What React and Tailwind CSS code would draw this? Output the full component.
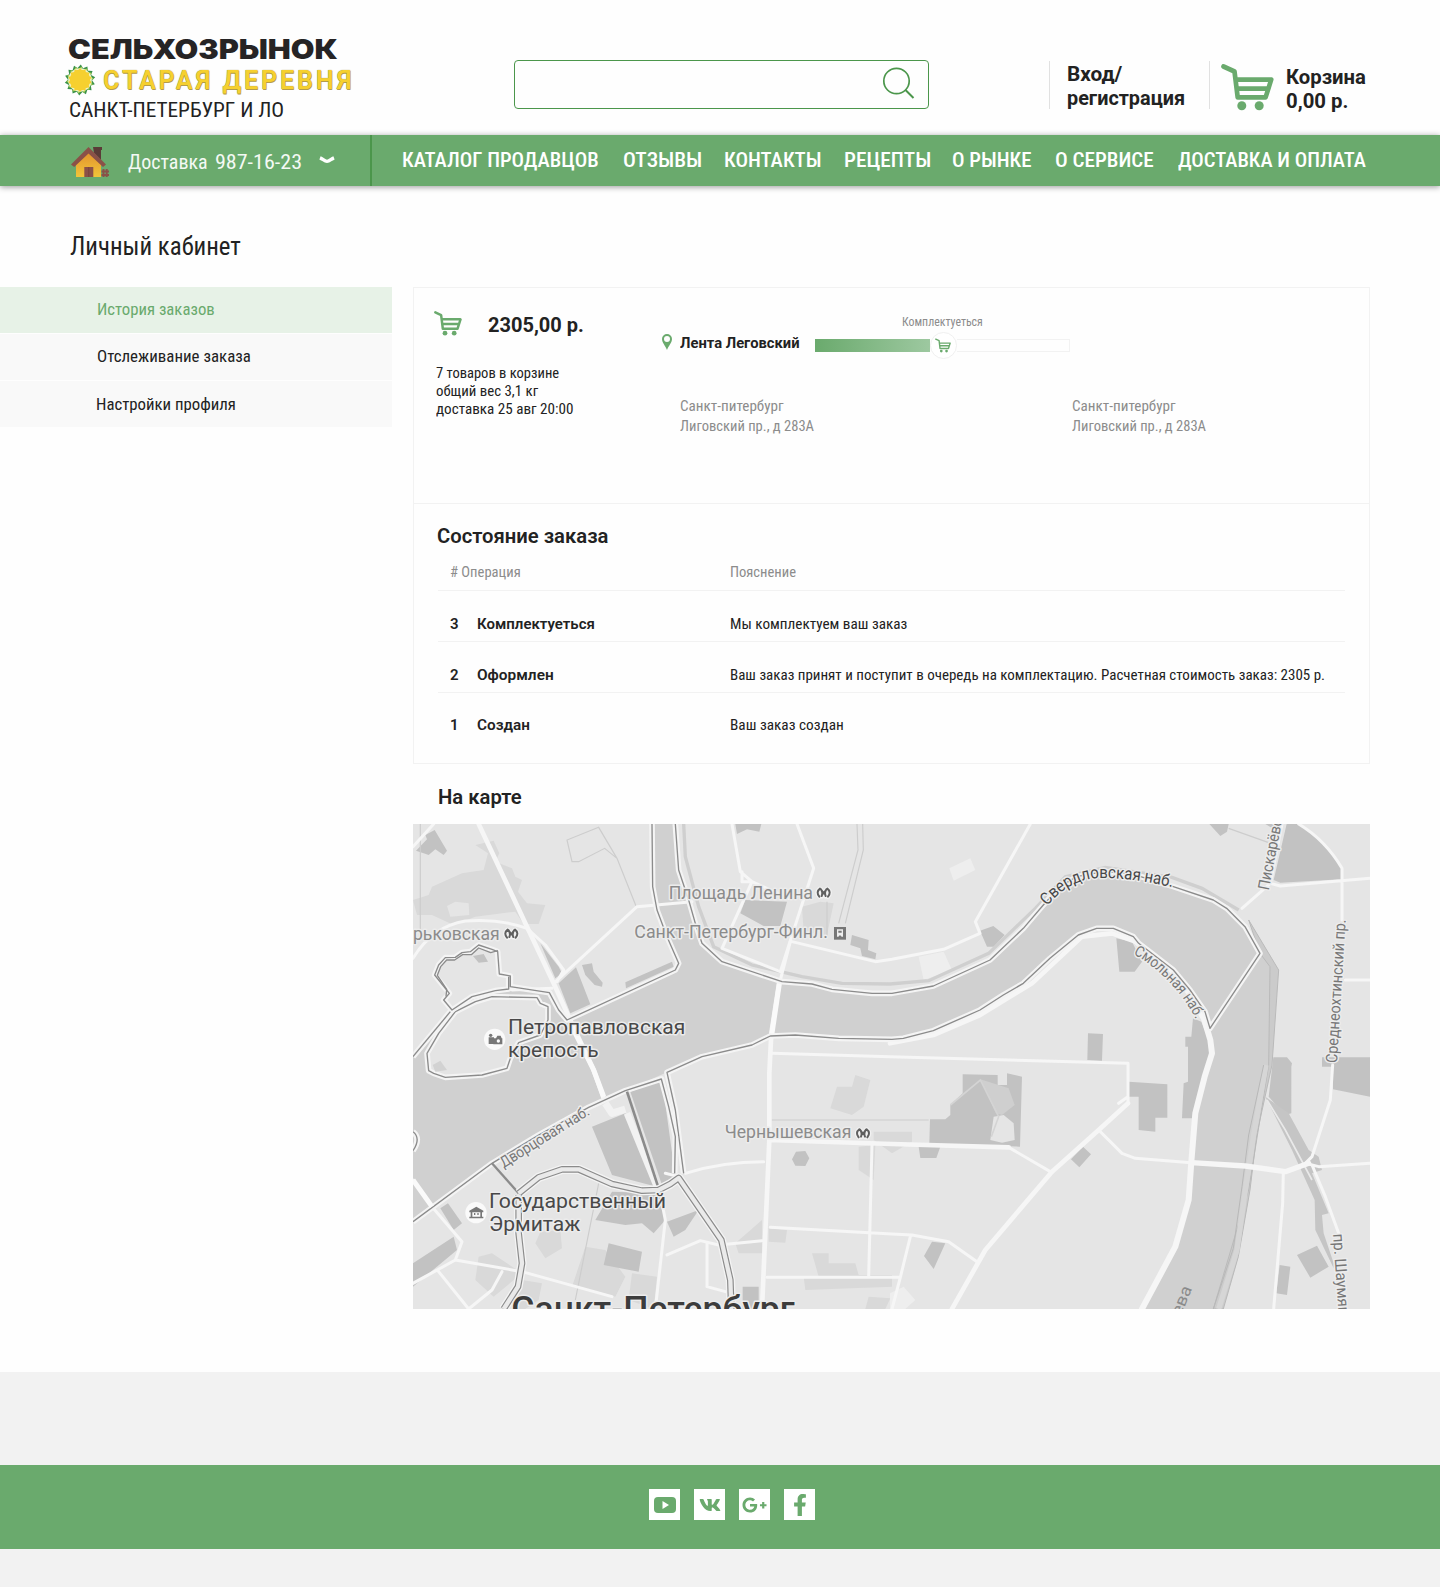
import React, { useLayoutEffect, useRef, useState } from "react";
import { FaVk, FaGooglePlusG, FaFacebookF } from "react-icons/fa";

/* One line of text, condensed or widened horizontally to the given width. */
function Fit({ w, className = "", children }) {
  const ref = useRef(null);
  const [k, setK] = useState(1);
  useLayoutEffect(() => {
    setK(w / ref.current.offsetWidth);
  }, [w, children]);
  return (
    <span className={"block shrink-0 whitespace-nowrap " + className} style={{ width: w }}>
      <span ref={ref} className="inline-block origin-left" style={{ transform: `scaleX(${k})` }}>
        {children}
      </span>
    </span>
  );
}

function Cart({ className }) {
  return (
    <svg viewBox="0 0 53 47" className={className} fill="none" stroke="#6aaa6d" strokeWidth="4.700" strokeLinecap="round" strokeLinejoin="round">
      <path d="M2.500 2.500 13.500 7.500 16.700 33.400H44.600L50.200 15.600H15M16 24.600H46" />
      <circle cx="20.800" cy="41.800" r="4.500" fill="#6aaa6d" stroke="none" />
      <circle cx="38.200" cy="41.800" r="4.500" fill="#6aaa6d" stroke="none" />
    </svg>
  );
}

const petals = Array.from({ length: 14 }, (_, i) => (i * 360) / 14);

function Sunflower() {
  return (
    <svg viewBox="-16 -16 32 32" className="h-8 w-8 shrink-0">
      {petals.map((a) => (
        <g key={a} transform={`rotate(${a})`}>
          <path d="M-4.200-10 0.800-15.400 4.200-10Z" fill="#3a9149" />
          <path d="M-1.500-11 1.800-13.500 3.400-10Z" fill="#a9cf58" />
        </g>
      ))}
      <circle r="11.800" fill="#eef3cf" />
      <circle r="10.400" fill="#f6d02f" />
      {petals.map((a) => (
        <circle key={a} r="1.300" cy="-10.200" fill="#f6d02f" transform={`rotate(${a})`} />
      ))}
    </svg>
  );
}

function House() {
  return (
    <svg viewBox="0 0 38 31" className="h-[31px] w-[38px] shrink-0">
      <defs>
        <linearGradient id="wall" x2="0" y2="1">
          <stop offset="0" stopColor="#e0902c" />
          <stop offset="1" stopColor="#f2c53a" />
        </linearGradient>
      </defs>
      <path d="M22 1h9v3h-1v10l-7-7Z" fill="#5a3b37" />
      <path d="M5 17 17.500 5 30 17V31H5Z" fill="url(#wall)" />
      <path d="M0 18.500 17.500 1 35 18.500 32 21 17.500 7.500 3.200 21Z" fill="#8a5148" />
      <rect x="13.300" y="21" width="9" height="10" fill="#8a5148" />
      <path d="M17.800 21v10" stroke="#75433c" />
      <path d="M32.500 23v8M35.700 23v8M30.500 25.500h7.500M30.500 29h7.500" stroke="#8a5148" strokeWidth="2" />
    </svg>
  );
}

const nav = [
  ["КАТАЛОГ ПРОДАВЦОВ", 197, "ml-[30px]"],
  ["ОТЗЫВЫ", 79, "ml-[24px]"],
  ["КОНТАКТЫ", 98, "ml-[22px]"],
  ["РЕЦЕПТЫ", 87, "ml-[22px]"],
  ["О РЫНКЕ", 80, "ml-[21px]"],
  ["О СЕРВИСЕ", 99, "ml-[23px]"],
  ["ДОСТАВКА И ОПЛАТА", 188, "ml-[24px]"],
];

const ops = [
  ["3", "Комплектуеться", 118, "Мы комплектуем ваш заказ", 177, "h-[51px] pt-[23px] border-b"],
  ["2", "Оформлен", 77, "Ваш заказ принят и поступит в очередь на комплектацию. Расчетная стоимость заказ: 2305 р.", 595, "h-[51px] pt-[23px] border-b"],
  ["1", "Создан", 53, "Ваш заказ создан", 114, "h-[70px] pt-[22px]"],
];

/* River bank: a dark line on a light casing. */
function Shore({ d, fill = "none" }) {
  return (
    <>
      <path d={d} fill={fill} stroke="#f4f4f4" strokeWidth="17" strokeLinejoin="round" />
      <path d={d} fill="none" stroke="#8b8b8b" strokeWidth="4" strokeLinejoin="round" />
    </>
  );
}

/* Narrow canal: two parallel dark lines with a light core. */
function Canal({ d }) {
  return (
    <g fill="none" strokeLinejoin="round">
      <path d={d} stroke="#f4f4f4" strokeWidth="28" />
      <path d={d} stroke="#8b8b8b" strokeWidth="20" />
      <path d={d} stroke="#eaeaea" strokeWidth="13" />
    </g>
  );
}

function Label({ x, y, len, size = 53, fill = "#8b8b8b", rot = 0, halo = "#ececec", weight = 400, children }) {
  return (
    <text
      transform={`translate(${x} ${y}) rotate(${rot})`}
      textLength={len}
      lengthAdjust="spacingAndGlyphs"
      fontSize={size}
      fontWeight={weight}
      fill={fill}
      stroke={halo}
      strokeWidth="9"
      strokeLinejoin="round"
      paintOrder="stroke"
    >
      {children}
    </text>
  );
}

function Metro({ x, y }) {
  return (
    <g transform={`translate(${x} ${y})`} fill="none" strokeLinecap="round" strokeLinejoin="round">
      <path d="M-12-11Q-24 0-12 12M12-11Q24 0 12 12M-5 11-9-10 0 4 9-10 5 11" stroke="#f2f2f2" strokeWidth="14" />
      <path d="M-11-12Q-24-2-13 12M11-12Q24-2 13 12M-6 10Q-1 0-9-11L0 2 9-11Q1 0 6 10" stroke="#606060" strokeWidth="6" />
    </g>
  );
}

function CityMap() {
  return (
    <svg viewBox="0 0 957 485" className="block h-[485px] w-[957px]" fontFamily="Roboto, sans-serif">
      <rect width="957" height="485" fill="#e5e5e5" />
      <g transform="translate(-1 -4) scale(.33333)">
        {/* parks and quarters */}
        <g fill="#d9d9d9">
          <path d="M190 75 245 62 262 100 250 125 300 145 310 170 330 180 318 215 345 250 400 255 380 312 335 312 310 275 190 290 125 315 60 285 15 285 3 240 50 225 60 200 150 160 215 150 228 100Z" />
          <path d="M1170 260 1225 245 1265 250 1245 345 1175 335ZM1275 800 1320 800 1330 765 1375 780 1355 860 1320 885 1255 865Z" />
          <path d="M385 1235 445 1230 450 1285 400 1315 370 1270ZM200 1310 240 1300 330 1360 245 1430 190 1380ZM520 1280 580 1290 640 1370 610 1430 480 1400ZM660 1360 735 1370 725 1467 650 1440ZM970 1270 1050 1200 1050 1300 980 1300ZM1070 1225 1125 1230 1120 1268 1070 1265ZM1200 1300 1250 1300 1250 1330 1330 1330 1340 1365 1440 1365 1440 1400 1180 1410 1175 1370 1220 1370ZM1340 980 1390 975 1385 1080 1340 1050Z" />
          <path d="M1385 935H1500V965L1440 1000 1385 960ZM330 1380 390 1390 380 1440 340 1467H310ZM1370 1430 1435 1435 1420 1467H1360Z" />
        </g>
        <path d="M105 258 130 245 170 250 172 285 115 290Z" fill="#e5e5e5" />
        <g fill="#c2c2c2">
          <path d="M12 92 45 58 40 45 68 30 105 92 95 105 70 88 50 105 35 100ZM970 12H1048L1042 35 1005 28 975 42ZM1000 240 1125 245 1105 318 1055 318 985 280ZM1320 345 1370 360 1368 390 1393 400 1390 418 1350 408 1345 385 1315 375ZM510 435 540 430 545 455 572 488 570 500 548 495 520 465ZM440 490 492 442 535 553 475 580ZM640 487 780 425 785 440 642 505ZM385 370 440 440 450 460 430 475ZM183 408 215 402 228 425 200 428Z" />
          <path d="M2560 12H2600L2590 30ZM2624 12H2664Q2730 60 2788 140V178L2605 188 2585 180ZM1704 332 1744 318 1778 345 1745 380H1725ZM2113 355 2160 365 2190 425 2168 455H2122ZM2028 640 2073 642 2070 722 2026 720ZM2392 12H2450L2445 35 2425 48Z" />
          <path d="M2343 595 2368 605 2390 660 2395 735 2365 870 2350 895 2310 895 2315 790 2328 785V680H2320V650H2338ZM2584 712H2625L2640 730 2638 740V880L2620 885 2570 830ZM2780 712H2874V830L2763 808V740H2730V712Z" />
          <path d="M1652 763 1757 765V795H1785V760L1830 770 1824 980 1552 972 1554 898H1600L1615 885V855L1652 820ZM2150 785 2266 793V893H2230V935L2180 930V830H2150ZM2013 980 2037 1003 2002 1042 1977 1018ZM1520 980H1585L1573 1014H1525ZM1560 1265 1600 1270 1565 1347 1536 1308ZM2603 1335 2635 1340 2625 1425 2593 1420ZM2655 1305 2715 1277 2750 1340 2695 1373ZM1140 1018 1152 995 1180 993 1192 1015 1180 1038 1150 1037Z" />
          <path d="M540 920 640 880 725 1098 600 1065ZM655 815 750 780 790 1070 750 1095ZM590 1270 690 1295 680 1355 575 1335ZM600 1115 740 1120 755 1165 760 1200 725 1240 690 1210 640 1215 550 1200ZM765 1205 860 1170 820 1230 785 1250ZM85 1165 108 1150 150 1210 125 1230ZM3 1330 125 1250 135 1290 3 1400ZM992 1400 1040 1400V1467H992Z" />
        </g>
        <path d="M1612 145 1675 115 1690 150 1625 182ZM1520 410 1595 395 1620 450 1535 480ZM1434 1420 1475 1400 1510 1440 1480 1467H1434Z" fill="#eeeeee" />
        <path d="M1705 778 1790 805 1808 855 1770 885 1752 880Z" fill="#cfcfcf" />
        <path d="M1735 960 1745 890 1775 885 1805 910 1808 960 1770 968Z" fill="#e5e5e5" />
        <path d="M1615 855 1705 780 1760 890 1738 950" fill="none" stroke="#d4d4d4" strokeWidth="5" />

        {/* thin district lines */}
        <g fill="none" stroke="#cdcdcd" strokeWidth="3.500">
          <path d="M25 12V330M672 258 615 115 560 22 465 60 480 125 500 125 578 85 615 115M1335 12 1338 90 1280 310M1352 12 1354 90 1300 310M1245 245V350M1078 900H1550M560 1090 490 1440M2450 25 2570 68" />
        </g>

        {/* water */}
        <path
          fill="#d0d0d0"
          d="M720 12 722 200 735 270 765 350 800 430 790 450 465 600 440 570 412 518 300 500 250 512 180 530 120 570 3 710V1205L240 1030 380 945 530 862 640 812 765 757 870 710 1020 675 1075 648 1150 645 1280 655 1440 658 1474 655 1564 632 1704 570 1774 525 1834 490 1914 415 1999 345 2054 325 2104 325 2164 350 2284 450 2334 510 2379 575 2394 625 2405 700 2389 735 2359 870 2339 1020 2329 1150 2284 1300 2194 1467H2434L2479 1310 2514 1110 2534 945 2578 735 2584 450 2544 400 2499 320 2444 265 2404 240 2284 200 2154 160 2074 155 1994 170 1944 200 1894 255 1834 325 1734 420 1564 498 1440 520 1380 520 1260 508 1200 492 1110 485 930 425 870 370 850 310 830 240 800 150 790 12Z"
        />
        {/* eastern embankment */}
        <path d="M2544 400 2574 440 2570 735 2510 1110 2404 1467H2434L2479 1310 2514 1110 2534 945 2580 735 2600 450 2510 300Z" fill="#cbcbcb" stroke="#bababa" strokeWidth="3" />
        <path d="M2562 735 2525 945 2500 1110 2475 1290 2420 1467" fill="none" stroke="#d6d6d6" strokeWidth="16" />
        <path d="M2555 735 2510 945 2490 1100 2464 1285 2404 1467" fill="none" stroke="#b8b8b8" strokeWidth="3" />
        <path d="M815 12 820 110 860 260 905 380 1020 435 1170 470 1290 490 1434 492 1550 482 1730 400 1870 265 1960 170 2080 142 2280 172 2370 205 2480 270" fill="none" stroke="#cfcfcf" strokeWidth="10" />
        <path d="M2560 830 2630 880 2690 990 2720 1010 2730 1050 2700 1060 2750 1180 2730 1185 2735 1240 2765 1330 2765 1345 2710 1230 2708 1140 2640 990Z" fill="#c5c5c5" />
        <path d="M2565 840 2620 930 2700 1080" fill="none" stroke="#e9e9e9" strokeWidth="5" />

        {/* roads */}
        <g fill="none" stroke="#f6f6f6" strokeLinejoin="round" strokeLinecap="round">
          <g strokeWidth="14">
            <path d="M200 12 345 320 425 490 470 590 545 750 575 835" />
            <path d="M1102 485 1078 640 1072 760V960L1050 1467M1072 960 1440 972 1790 982" />
            <path d="M2374 590 2395 660 2400 700 2378 770 2350 880 2338 1025 2330 1140 2290 1280 2190 1467" strokeWidth="18" />
            <path d="M1434 670 1564 645 1704 585 1860 490 2010 350 2100 340 2170 365 2300 470 2370 590" />
            <path d="M2338 1028 2500 1038 2620 1055 2690 1030" strokeWidth="16" />
            <path d="M2148 850 2060 930 1920 1055 1720 1290 1620 1467" />
          </g>
          <g strokeWidth="9">
            <path d="M3 80 65 12M3 415Q60 320 160 303 260 295 345 325L400 375 455 450M425 490 675 260 840 245M435 485 455 450M960 12 985 155 1020 185 930 385 1105 455 1205 145 1155 12M990 155V185H1020L1130 235M1140 365 1390 425 1440 418 1595 388 1704 340 1690 305 1855 12" />
            <path d="M1105 480 1135 365M300 510 420 505M1080 700 1434 710 2148 730V850M1075 1222 1440 1242 1500 1245 1610 1265 1695 1325M1065 1372H1465L1440 1467M1465 1372 1495 1250M1380 975 1370 1370M1790 982 1920 1058M2060 930 2130 1000 2170 1015 2338 1028M2120 850 2148 830" />
            <path d="M820 1060Q930 1025 1055 1025M750 1150 760 1200 730 1467M765 1305 865 1262 920 1275 1050 1262M885 1270V1400L940 1415M130 1320 330 1355 600 1430M3 1390 130 1320 150 1265 60 1160 3 1080M80 1355 170 1467M170 1467 240 1410 270 1355M760 1060 800 1070" />
            <path d="M2490 265 2575 190 2605 198 2874 175M2575 190 2610 12M2660 12Q2740 60 2790 145V300M2800 480H2874M2762 735 2755 840 2700 1010 2680 1030 2720 1040 2874 1030M2700 1035 2740 1130 2780 1240M2614 1055 2612 1150 2585 1467" />
          </g>
        </g>

        {/* shorelines */}
        <Shore d="M50 752 45 700 80 640 130 575 190 545 240 530 375 533 385 550 408 560V600L385 645 320 668 295 715 285 745 210 765 100 772 65 760Z" fill="#e4e4e4" />
        <path d="M62 735 85 722 105 750 70 755Z" fill="#d2d2d2" />
        <Shore d="M720 12 722 200 735 270 765 350 800 430 790 450 465 600 440 570 412 518 295 500 295 468 262 462 257 395 240 388 200 375 175 395 150 398 130 412 100 413 80 435 68 465 112 520 95 540 120 570 180 530 250 512 290 507V470" />
        <Shore d="M3 710 115 575" />
        <Shore d="M790 12 800 150 830 240 850 310 870 370 930 425 1110 485 1200 492 1260 508 1380 520 1440 520 1564 498 1734 420 1834 325 1894 255 1944 200 1994 170 2074 155 2154 160 2284 200 2404 240 2444 265 2499 320 2544 400 2394 625 2379 575 2334 510 2284 450 2180 370 2164 350 2104 325H2054L1999 345 1914 415 1834 490 1774 525 1704 570 1564 632 1474 655 1440 658 1280 655 1150 645 1075 648 1020 675 870 710 765 757 790 870 815 1060" />
        <path d="M645 880 735 1100" fill="none" stroke="#f2f2f2" strokeWidth="20" />
        <path d="M580 850 600 880 640 868" fill="none" stroke="#f2f2f2" strokeWidth="22" strokeLinejoin="round" />
        <Shore d="M3 1205 240 1030 380 945 530 862 640 812 748 777 770 860 790 950 788 1060" />
        <path d="M645 815 740 1105" fill="none" stroke="#8b8b8b" strokeWidth="8" />
        <path d="M240 1030 320 1120" fill="none" stroke="#8b8b8b" strokeWidth="7" />
        <Canal d="M320 1120 380 1072 450 1048 500 1048 600 1092 690 1112 740 1110 775 1092 800 1074 928 1260 955 1380 958 1467" />
        <Canal d="M320 1125V1240L330 1330 318 1400 275 1467" />
        <Shore d="M3 935Q28 955 3 992" />
        <path d="M258 392 236 398 200 384 178 404 152 404 128 420 104 420 86 440 76 466 104 508 102 530" fill="none" stroke="#8b8b8b" strokeWidth="4" strokeLinejoin="round" />
        <path d="M480 620 545 750 575 830M1102 492 1080 640M3 1080 60 1160" fill="none" stroke="#fafafa" strokeWidth="15" />

        {/* place markers */}
        <g>
          <circle cx="248" cy="658" r="32" fill="#fafafa" />
          <path d="M230 652h16v20h-16ZM244 655h8l4-8h10l3 8h2v18h-27Z" fill="#777" />
          <circle cx="236" cy="646" r="5" fill="#777" />
          <circle cx="259" cy="663" r="5" fill="#fafafa" />
          <circle cx="192" cy="1178" r="32" fill="#fafafa" />
          <path d="M172 1172 193 1160 214 1172V1177H172ZM176 1177h5v14h-5ZM205 1177h5v14h-5ZM172 1190h42v5H172ZM186 1179h4v6h-4ZM196 1179h4v6h-4Z" fill="#777" />
          <rect x="1266" y="321" width="36" height="38" fill="#777" />
          <path d="M1275 328h18v22h-4l-5-5-5 5h-4ZM1279 332h10v6h-10Z" fill="#eee" fillRule="evenodd" />
        </g>
        <Metro x={1235} y={218} />
        <Metro x={298} y={341} />
        <Metro x={1353} y={940} />

        {/* labels */}
        <Label x={770} y={237} len={433}>Площадь Ленина</Label>
        <Label x={3} y={360} len={260}>рьковская</Label>
        <Label x={667} y={355} len={581}>Санкт-Петербург-Финл.</Label>
        <Label x={938} y={955} len={380}>Чернышевская</Label>
        <Label x={288} y={643} len={532} size={63} fill="#484848">Петропавловская</Label>
        <Label x={288} y={712} len={272} size={63} fill="#484848">крепость</Label>
        <Label x={231} y={1164} len={531} size={63} fill="#484848">Государственный</Label>
        <Label x={231} y={1234} len={274} size={63} fill="#484848">Эрмитаж</Label>
        <Label x={298} y={1503} len={850} size={105} fill="#3c3c3c" weight={500}>Санкт-Петербург</Label>
        <Label x={275} y={1045} len={307} size={46} fill="#777" rot={-32}>Дворцовая наб.</Label>
        <Label x={2570} y={212} len={240} size={48} fill="#777" rot={-79}>Пискарёвск</Label>
        <Label x={2775} y={730} len={432} size={48} fill="#777" rot={-86.5}>Среднеохтинский пр.</Label>
        <Label x={2763} y={1242} len={270} size={48} fill="#777" rot={86}>пр. Шаумяна</Label>
        <Label x={2292} y={1526} len={130} size={50} fill="#8b8b8b" halo="#d0d0d0" rot={-68}>Нева</Label>
        <path id="north" d="M1905 258C1960 195 2010 175 2070 174 2140 174 2210 185 2300 206" fill="none" />
        <path id="east" d="M2164 402C2235 440 2315 520 2352 600" fill="none" />
        <g stroke="#ececec" strokeWidth="9" paintOrder="stroke" strokeLinejoin="round">
          <text fontSize="51" fill="#484848">
            <textPath href="#north" textLength="405" lengthAdjust="spacingAndGlyphs">Свердловская наб.</textPath>
          </text>
          <text fontSize="46" fill="#777">
            <textPath href="#east" textLength="275" lengthAdjust="spacingAndGlyphs">Смольная наб.</textPath>
          </text>
        </g>
      </g>
    </svg>
  );
}

function Address() {
  return (
    <div className="text-[15px] leading-5 text-[#8c8c8c] [font-stretch:75%]">
      <Fit w={104}>Санкт-питербург</Fit>
      <Fit w={134}>Лиговский пр., д 283А</Fit>
    </div>
  );
}

function Social({ children }) {
  return <a className="flex h-[31px] w-[31px] items-center justify-center bg-white text-[#6aaa6d]">{children}</a>;
}

export default function App() {
  return (
    <div className="min-h-[1587px] w-[1440px] overflow-hidden bg-[#fefefe] font-['Roboto',sans-serif] text-[#222]">
      <header className="flex h-[135px] items-start">
        <div className="w-[514px] shrink-0 pl-16 pt-[35px]">
          <Fit w={270} className="ml-[4px] h-[29px] font-['Inter'] text-[27px] leading-[30px] font-black text-[#262425]">СЕЛЬХОЗРЫНОК</Fit>
          <div className="flex h-[31px] items-center">
            <Sunflower />
            <Fit
              w={251}
              className="mt-[2px] ml-[7px] text-[25px] leading-[31px] font-semibold tracking-[3px] text-[#f6d02f] [text-shadow:0_0_1px_#8a7a30,0.5px_0.5px_0_#b8a050]"
            >
              СТАРАЯ ДЕРЕВНЯ
            </Fit>
          </div>
          <Fit w={215} className="ml-[5px] text-[20px] leading-[31px] [font-stretch:75%]">САНКТ-ПЕТЕРБУРГ И ЛО</Fit>
        </div>
        <div className="mt-[60px] flex h-[49px] w-[415px] shrink-0 rounded border border-[#4b964b] pl-[367px] pt-[6px]">
          <svg viewBox="0 0 33 33" className="h-[33px] w-[33px]" fill="none" stroke="#4b964b" strokeWidth="1.700">
            <circle cx="14.500" cy="14" r="12.700" />
            <path d="M23.500 23 31.500 31" strokeWidth="2" />
          </svg>
        </div>
        <a className="mt-[61px] ml-[120px] block h-12 w-[160px] shrink-0 border-l border-[#e1e1e1] pt-px pl-[17px] text-[20px] leading-6 font-bold">
          <Fit w={55}>Вход/</Fit>
          <Fit w={118}>регистрация</Fit>
        </a>
        <a className="mt-[61px] flex h-12 shrink-0 border-l border-[#e1e1e1] text-[20px] leading-6 font-bold">
          <Cart className="mt-[3px] ml-[11px] h-[47px] w-[53px]" />
          <span className="mt-1 ml-[12px] block">
            <Fit w={80}>Корзина</Fit>
            <Fit w={62}>0,00 р.</Fit>
          </span>
        </a>
      </header>

      <nav className="relative flex h-[51px] items-center bg-[#6aaa6d] text-[20px] text-white shadow-[0_1px_6px_rgba(0,0,0,0.4)]">
        <div className="flex h-full w-[372px] shrink-0 items-center border-r-2 border-[#4b964b] pt-[2px] pl-[71px] text-[#f4f9f4] [font-stretch:75%]">
          <House />
          <Fit w={80} className="ml-[19px]">Доставка</Fit>
          <Fit w={87} className="ml-[7px]">987-16-23</Fit>
          <svg viewBox="0 0 16 9" className="mb-[3px] ml-[17px] h-[9px] w-4" fill="none" stroke="#fff" strokeWidth="3.400">
            <path d="M1 1.800C4 3 5.500 5.400 8 5.400S12 3 15 1.800" />
          </svg>
        </div>
        {nav.map(([t, w, m]) => (
          <div key={t} className={m}>
            <Fit w={w} className="leading-[48px] pb-[2px] font-medium [font-stretch:75%]">{t}</Fit>
          </div>
        ))}
      </nav>

      <h1 className="mt-[45px] ml-[70px] text-[25px] leading-8 [font-stretch:75%]">
        <Fit w={171}>Личный кабинет</Fit>
      </h1>

      <div className="mt-[24px] flex">
        <aside className="flex w-[413px] shrink-0 flex-col gap-px text-[17px] leading-[44px] [font-stretch:75%]">
          <a className="h-[46px] w-[392px] bg-[#e7f2e7] pl-[97px] text-[#6aaa6d]">
            <Fit w={118}>История заказов</Fit>
          </a>
          <a className="h-[46px] w-[392px] bg-[#f9f9f9] pl-[97px]">
            <Fit w={154}>Отслеживание заказа</Fit>
          </a>
          <a className="h-[46px] w-[392px] bg-[#f9f9f9] pl-[96px]">
            <Fit w={140} className="mt-px">Настройки профиля</Fit>
          </a>
        </aside>

        <main className="w-[957px]">
          <section className="h-[477px] border border-[#f2f2f2]">
            <div className="flex h-[216px] border-b border-[#f2f2f2]">
              <div className="w-[248px] shrink-0 pl-[20px] pt-[23px]">
                <div className="flex h-[30px]">
                  <Cart className="h-[25px] w-[28px]" />
                  <Fit w={96} className="ml-[26px] text-[20px] leading-[29px] font-bold">2305,00 р.</Fit>
                </div>
                <div className="mt-[23px] ml-[2px] text-[15px] leading-[18px] [font-stretch:75%]">
                  <Fit w={123}>7 товаров в корзине</Fit>
                  <Fit w={102}>общий вес 3,1 кг</Fit>
                  <Fit w={137}>доставка 25 авг 20:00</Fit>
                </div>
              </div>
              <div className="w-[410px] shrink-0 pt-[24px]">
                <div className="ml-[240px] text-[12px] leading-5 text-[#8c8c8c] [font-stretch:75%]">
                  <Fit w={81}>Комплектуеться</Fit>
                </div>
                <div className="flex h-[27px] items-center">
                  <svg viewBox="0 0 10 16" className="mb-[8px] h-4 w-[10px]">
                    <path fillRule="evenodd" fill="#6aaa6d" d="M5 0a5 5 0 0 1 5 5c0 3.500-3.500 7-5 11C3.500 12 0 8.500 0 5a5 5 0 0 1 5-5Zm0 2a3 3 0 1 0 0 6 3 3 0 0 0 0-6Z" />
                  </svg>
                  <Fit w={120} className="mb-[5px] ml-[8px] text-[15px] leading-5 font-bold">Лента Леговский</Fit>
                  <div className="ml-[15px] flex h-[27px] shrink-0 items-center">
                    <div className="h-[13px] w-[115px] bg-linear-to-r from-[#6aaa6d] to-[#9dc8a0]" />
                    <div className="flex h-[27px] w-[27px] items-center justify-center rounded-full border border-[#f0f0f0] bg-white pr-px pb-px">
                      <Cart className="h-[15px] w-[16px]" />
                    </div>
                    <div className="h-[13px] w-[113px] border border-l-0 border-[#f2f2f2]" />
                  </div>
                </div>
                <div className="mt-[37px] ml-[18px]">
                  <Address />
                </div>
              </div>
              <div className="pt-[108px]">
                <Address />
              </div>
            </div>

            <div className="pt-[18px] pr-[24px] pl-[24px]">
              <h2 className="-ml-px text-[20px] leading-[29px] font-semibold">
                <Fit w={171}>Состояние заказа</Fit>
              </h2>
              <div className="flex h-[40px] border-b border-[#f2f2f2] pt-[11px] pl-[12px] text-[15px] leading-5 text-[#8c8c8c] [font-stretch:75%]">
                <Fit w={71}>{"# Операция"}</Fit>
                <Fit w={66} className="ml-[209px]">Пояснение</Fit>
              </div>
              {ops.map(([n, name, w, text, tw, cls]) => (
                <div key={n} className={"flex border-[#f2f2f2] pl-[12px] text-[15px] leading-5 " + cls}>
                  <div className="w-[27px] font-semibold">{n}</div>
                  <div className="w-[253px] font-semibold">
                    <Fit w={w}>{name}</Fit>
                  </div>
                  <Fit w={tw} className="[font-stretch:75%]">{text}</Fit>
                </div>
              ))}
            </div>
          </section>
          <h2 className="mt-[18px] mb-[12px] ml-[25px] text-[20px] leading-[30px] font-semibold">
            <Fit w={84}>На карте</Fit>
          </h2>
          <CityMap />
        </main>
      </div>

      <footer className="mt-[63px] h-[215px] bg-[#f2f2f2] pt-[93px]">
        <div className="flex h-[84px] gap-[14px] bg-[#6aaa6d] pt-6 pl-[649px]">
          <Social>
            <svg viewBox="0 0 22 16" className="h-4 w-[22px]">
              <rect width="22" height="16" rx="4" fill="#6aaa6d" />
              <path d="m8.500 4 6.500 4-6.500 4Z" fill="#fff" />
            </svg>
          </Social>
          <Social><FaVk className="h-[24px] w-[22px]" /></Social>
          <Social><FaGooglePlusG className="h-[26px] w-[25px]" /></Social>
          <Social><FaFacebookF className="h-[22px] w-[14px]" /></Social>
        </div>
      </footer>
    </div>
  );
}
